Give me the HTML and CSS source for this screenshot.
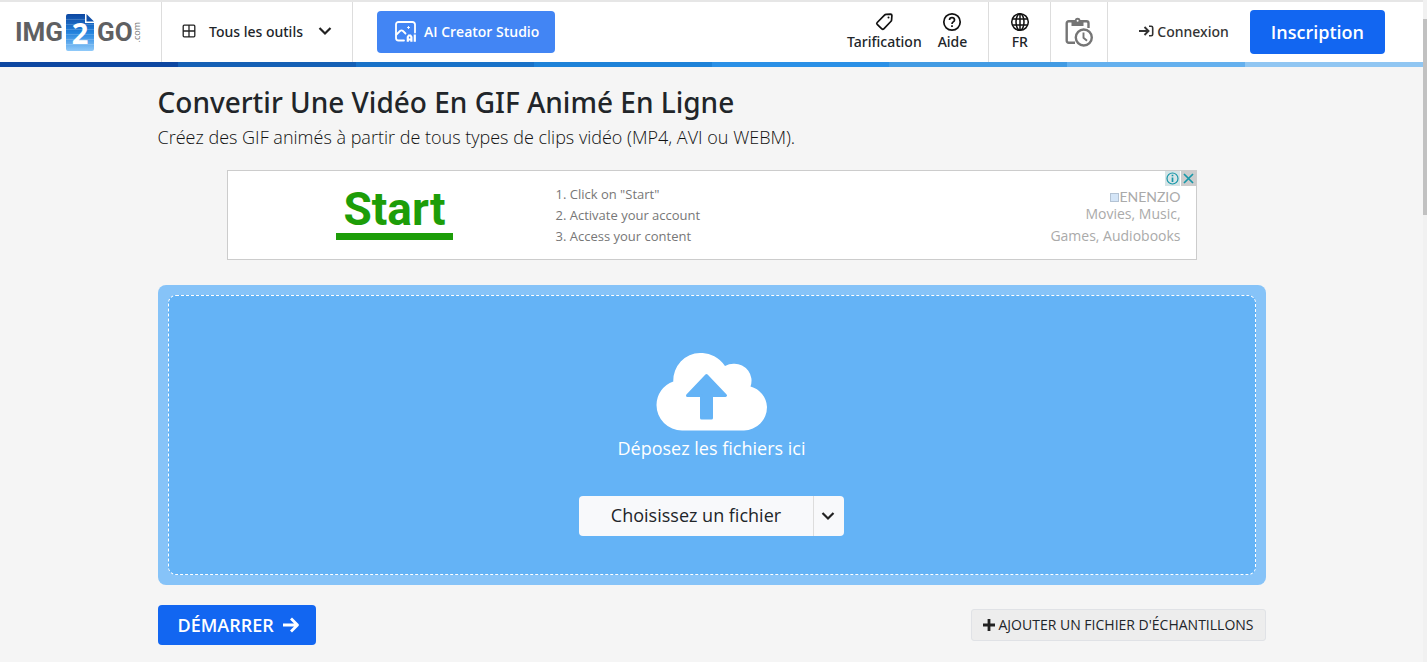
FILE: index.html
```html
<!DOCTYPE html>
<html lang="fr">
<head>
<meta charset="utf-8">
<meta name="viewport" content="width=device-width, initial-scale=1">
<title>Convertir une vidéo en GIF animé en ligne</title>
<link rel="stylesheet" href="styles.css">
</head>
<body>
<div class="page">
  <header class="header">
    <a class="logo" href="#" aria-label="IMG2GO.com">
      <span class="logo-word">IMG</span>
      <span class="logo-page">
        <svg class="logo-sheet" viewBox="0 0 28 37" aria-hidden="true">
          <defs><linearGradient id="sheet" x1="0" y1="0" x2="0" y2="1"><stop offset="0" stop-color="#0d47a1"/><stop offset=".5" stop-color="#2383dd"/><stop offset="1" stop-color="#90caf9"/></linearGradient></defs>
          <path fill="url(#sheet)" d="M2 0h17v9h9v26a2 2 0 0 1-2 2H2a2 2 0 0 1-2-2V2a2 2 0 0 1 2-2z"/>
          <path fill="#1250a8" d="M20.500 0L28 7.500h-7.500z"/>
          <path stroke="#fff" stroke-opacity=".18" d="M0 5.500h19M0 10.500h28M0 15.500h28M0 20.500h28M0 25.500h28M0 30.500h28"/>
        </svg>
        <span class="logo-two">2</span>
      </span>
      <span class="logo-word">GO</span>
      <span class="logo-com">.com</span>
    </a>
    <button class="tools" type="button">
      <svg width="14" height="14" viewBox="0 0 14 14" fill="none" stroke="#222" stroke-width="1.300" aria-hidden="true"><rect x="1.200" y="1.200" width="11.600" height="11.600" rx="1"/><path d="M7 1v12M1 7h12"/></svg>
      <span>Tous les outils</span>
      <svg width="14" height="10" viewBox="0 0 14 10" fill="none" stroke="#222" stroke-width="2.200" aria-hidden="true"><path d="M1.500 2L7 7.500 12.500 2"/></svg>
    </button>
    <a class="creator" href="#">
      <svg width="21" height="21" viewBox="0 0 21 21" fill="none" stroke="#fff" stroke-width="1.800" stroke-linecap="round" stroke-linejoin="round" aria-hidden="true"><path d="M9 19.500H3.500a2.500 2.500 0 0 1-2.500-2.500V3.500A2.500 2.500 0 0 1 3.500 1h14A2.500 2.500 0 0 1 20 3.500v8"/><path d="M1.500 13.500L5 10q1.500-1.300 3 0l2.500 2.500"/><path stroke-width="1" d="M13.500 5.500v2M12.500 6.500h2"/><path stroke-linecap="butt" stroke-linejoin="miter" stroke-width="2.200" d="M12.800 20.800V16l1-1.500h1.600l1 1.500v4.800M12.500 18.500h4M19.800 13.500v7.300"/></svg>
      <span>AI Creator Studio</span>
    </a>
    <nav class="nav">
      <div class="nav-group">
        <a class="nav-link" href="#">
          <svg width="20" height="20" viewBox="0 0 20 20" fill="none" stroke="#111" stroke-width="1.700" stroke-linejoin="round" aria-hidden="true"><path d="M3.200 10.500L10.500 3.200Q11.200 2.500 12.200 2.400L16.500 2.100Q17.900 2.100 17.900 3.500L17.600 7.800Q17.500 8.800 16.800 9.500L9.800 16.800Q8.800 17.700 7.800 16.800L3.200 12.400Q2.300 11.500 3.200 10.500z"/><circle cx="14.500" cy="5.500" r="1" fill="#111" stroke="none"/></svg>
          <span>Tarification</span>
        </a>
        <a class="nav-link" href="#">
          <svg width="20" height="20" viewBox="0 0 20 20" fill="none" stroke="#111" stroke-width="1.700" aria-hidden="true"><circle cx="10" cy="10" r="8.200"/><path d="M7.500 8Q7.600 5.700 10 5.700T12.500 7.900Q12.500 9 11.200 9.900Q10 10.700 10 12"/><path d="M10 13.300v1.800"/></svg>
          <span>Aide</span>
        </a>
      </div>
      <button class="nav-link lang" type="button">
        <svg width="20" height="20" viewBox="0 0 20 20" fill="none" stroke="#111" stroke-width="1.500" aria-hidden="true"><circle cx="10" cy="10" r="8.300"/><ellipse cx="10" cy="10" rx="4" ry="8.300"/><path d="M10 1.700v16.600M2.500 7h15M2.500 13h15"/></svg>
        <span>FR</span>
      </button>
      <button class="history" type="button" aria-label="Historique">
        <svg width="30" height="32" viewBox="0 0 30 32" fill="none" stroke="#757575" stroke-width="2.400" aria-hidden="true"><path d="M11 26.700H4.700a2 2 0 0 1-2-2V7.200a2 2 0 0 1 2-2H8M19 5.200h3.500a2 2 0 0 1 2 2V12"/><path fill="#757575" stroke="none" d="M7.500 4H10.800a2.900 2.900 0 0 1 5.700 0H19.500V10H7.500z"/><circle cx="13.600" cy="4.800" r="1" fill="#fff" stroke="none"/><circle cx="19.800" cy="21.500" r="8"/><path stroke-width="1.900" d="M19.500 16.500v5.300l3.500 3"/></svg>
      </button>
      <a class="login" href="#">
        <svg width="15" height="12" viewBox="0 0 15 12" fill="none" stroke="#333" stroke-width="1.900" aria-hidden="true"><path d="M0 6h9M5.500 2L9.500 6l-4 4"/><path d="M10 1.200h2.200a1.500 1.500 0 0 1 1.500 1.500v6.600a1.500 1.500 0 0 1-1.500 1.500H10" stroke-width="1.600"/></svg>
        <span>Connexion</span>
      </a>
      <a class="signup" href="#">Inscription</a>
    </nav>
  </header>
  <div class="stripe"><i class="s1"></i><i class="s2"></i><i class="s3"></i><i class="s4"></i><i class="s5"></i><i class="s6"></i><i class="s7"></i><i class="s8"></i></div>

  <main class="main">
    <h1 class="title">Convertir Une Vidéo En GIF Animé En Ligne</h1>
    <p class="subtitle">Créez des GIF animés à partir de tous types de clips vidéo (MP4, AVI ou WEBM).</p>

    <aside class="ad">
      <a class="ad-start" href="#">Start</a>
      <ol class="ad-steps"><li>Click on "Start"</li><li>Activate your account</li><li>Access your content</li></ol>
      <div class="ad-brand">
        <div class="ad-name"><span class="ad-mark"></span>ENENZIO</div>
        <div>Movies, Music,</div>
        <div>Games, Audiobooks</div>
      </div>
      <div class="ad-controls">
        <button class="ad-info" type="button" aria-label="Info"><svg width="13" height="13" viewBox="0 0 13 13" fill="none" stroke="#1797a8" aria-hidden="true"><circle cx="6.500" cy="6.500" r="5.500" stroke-width="1.200"/><path stroke-width="1.700" d="M6.500 5.500v4.500M6.500 2.800v1.500"/></svg></button>
        <button class="ad-close" type="button" aria-label="Close"><svg width="11" height="11" viewBox="0 0 11 11" stroke="#1797a8" stroke-width="1.700" aria-hidden="true"><path d="M1 1l9 9M10 1l-9 9"/></svg></button>
      </div>
    </aside>

    <section class="drop">
      <div class="drop-zone">
        <svg width="112" height="78" viewBox="0 0 112 78" aria-hidden="true"><path fill="#fff" d="M26 77.500A25.500 25.500 0 0 1 .500 52A25 25 0 0 1 17.300 28.500A27 27.500 0 0 1 44 0A28 28 0 0 1 69 13A17 17 0 0 1 78 10.700A17 17 0 0 1 94.500 33.500A22.500 22.500 0 0 1 111 54A23.500 23.500 0 0 1 88 77.500z"/><path fill="#64b3f6" stroke="#64b3f6" stroke-width="3" stroke-linejoin="round" d="M50.500 22.500L69.500 42.500H55.500V65H45.500V42.500H31.500z"/></svg>
        <p class="drop-text">Déposez les fichiers ici</p>
        <div class="choose">
          <button class="choose-main" type="button">Choisissez un fichier</button>
          <button class="choose-more" type="button" aria-label="Plus de sources"><svg width="14" height="10" viewBox="0 0 14 10" fill="none" stroke="#222" stroke-width="2.200" aria-hidden="true"><path d="M1.500 2L7 7.500 12.500 2"/></svg></button>
        </div>
      </div>
    </section>

    <div class="actions">
      <button class="start" type="button"><span>DÉMARRER</span><svg width="18" height="16" viewBox="0 0 18 16" fill="none" stroke="#fff" stroke-width="2.800" stroke-linejoin="round" aria-hidden="true"><path d="M1 8h14M9 1.500L15.500 8 9 14.500"/></svg></button>
      <button class="sample" type="button"><svg width="12" height="12" viewBox="0 0 12 12" stroke="#222" stroke-width="2.800" aria-hidden="true"><path d="M6 0v12M0 6h12"/></svg><span>AJOUTER UN FICHIER D'ÉCHANTILLONS</span></button>
    </div>
  </main>
</div>
<div class="scroll" aria-hidden="true"><div class="scroll-thumb"></div></div>
</body>
</html>
```

FILE: styles.css
```css
* { box-sizing: border-box; }

body {
  margin: 0;
  display: flex;
  min-height: 100vh;
  background: #f5f5f5;
  color: #212529;
  font-family: "Open Sans", "Noto Sans", sans-serif;
  font-size: 14px;
}

a { color: inherit; text-decoration: none; }
button { font: inherit; color: inherit; border: 0; background: none; padding: 0; cursor: pointer; }
h1, p, ol { margin: 0; padding: 0; }
svg { display: block; flex: none; }

.page { flex: 1; min-width: 0; }

.scroll { width: 4px; padding-top: 19px; background: #f1f1f1; }
.scroll-thumb { height: 196px; background: #c1c1c1; }

/* Header */
.header {
  display: flex;
  align-items: stretch;
  height: 62px;
  background: #fff;
  border-top: 2px solid #e6e6e6;
  font-family: "Noto Sans", "Open Sans", sans-serif;
}

.logo {
  display: flex;
  align-items: center;
  gap: 3px;
  width: 162px;
  padding-left: 15px;
  border-right: 1px solid #ddd;
  color: #5f6062;
}
.logo-word { font: 700 26px/28px Roboto, sans-serif; }
.logo-page { display: grid; place-items: center; }
.logo-page > * { grid-area: 1 / 1; }
.logo-sheet { width: 28px; height: 37px; }
.logo-two { font: 700 29px/37px "Open Sans", sans-serif; color: #fff; }
.logo-com { margin-left: -3px; font: 9px/8px "Open Sans", sans-serif; writing-mode: vertical-rl; transform: rotate(180deg); color: #777; }

.tools {
  display: flex;
  align-items: center;
  gap: 13px;
  width: 191px;
  padding: 0 0 2px 20px;
  border-right: 1px solid #ddd;
  font-weight: 500;
}
.tools span { margin-right: 2px; }

.creator {
  display: flex;
  align-items: center;
  height: 42px;
  margin: 9px 0 0 24px;
  gap: 8px;
  padding: 0 16px 2px 18px;
  border-radius: 4px;
  background: #4285f4;
  color: #fff;
  font-family: "Open Sans", sans-serif;
  font-weight: 600;
}

.nav { display: flex; margin-left: auto; }
.nav-group { display: flex; gap: 16px; padding-right: 21px; border-right: 1px solid #ddd; }
.nav-link {
  display: flex;
  flex-direction: column;
  align-items: center;
  justify-content: flex-start;
  padding-top: 10px;
  font-weight: 500;
  line-height: 20px;
}
.lang { width: 62px; border-right: 1px solid #ddd; }
.history { display: grid; place-items: center; width: 57px; border-right: 1px solid #ddd; }
.login { display: flex; align-items: center; gap: 3px; padding: 0 21px 2px 31px; color: #333; font-weight: 500; }
.signup {
  align-self: center;
  margin-right: 38px;
  padding: 0 21px;
  border-radius: 4px;
  background: #1266f1;
  color: #fff;
  font-family: "Open Sans", sans-serif;
  font-size: 18px;
  font-weight: 600;
  line-height: 44px;
}

.stripe { display: flex; height: 5px; }
.stripe i { flex: 1; }
.s1 { background: #0d47a1; }
.s2 { background: #1560b5; }
.s3 { background: #1972c8; }
.s4 { background: #1e82d8; }
.s5 { background: #2a90e6; }
.s6 { background: #429be3; }
.s7 { background: #64b0ee; }
.s8 { background: #90c6f2; }

/* Content */
.main { max-width: 1108px; margin: 0 auto; padding-top: 16px; }
.title { font: 500 28px/38px "Noto Sans", sans-serif; }
.subtitle { padding-top: 2px; font-size: 18px; font-weight: 300; line-height: 28px; color: #111; }

.ad {
  position: relative;
  display: grid;
  grid-template-columns: 328px 1fr auto;
  max-width: 970px;
  height: 90px;
  margin: 19px auto 25px;
  padding-right: 15px;
  border: 1px solid #ccc;
  background: #fff;
}
.ad-start {
  justify-self: center;
  align-self: start;
  margin: 15px 0 0 6px;
  padding: 0 7px;
  border-bottom: 7px solid #1d9d08;
  color: #1d9d08;
  font: 700 46px/47px Roboto, sans-serif;
}
.ad-steps { padding-top: 13px; list-style: none; counter-reset: step; color: #777; font-size: 13px; line-height: 21px; }
.ad-steps li { counter-increment: step; }
.ad-steps li::before { content: counter(step) ". "; }
.ad-brand { padding-top: 20px; color: #aaa; line-height: 22px; text-align: right; }
.ad-name { display: flex; align-items: center; justify-content: flex-end; height: 12px; font: 14px/12px Lato, sans-serif; }
.ad-mark { width: 9px; height: 9px; border: 1px solid #b4c3d4; background: #d4e5f7; }
.ad-controls { position: absolute; top: 0; right: 0; display: flex; gap: 1px; }
.ad-controls button { display: grid; place-items: center; width: 15px; height: 15px; background: #ccc; }
.ad-controls .ad-info { background: #d6e4e6; }

.drop { padding: 10px; border-radius: 8px; background: #86c3f8; }
.drop-zone {
  display: flex;
  flex-direction: column;
  align-items: center;
  height: 280px;
  padding-top: 57px;
  border: 1px dashed #fff;
  border-radius: 8px;
  background: #64b3f6;
}
.drop-text { padding-top: 3px; color: #fff; font-size: 18px; line-height: 28px; }
.choose { display: flex; height: 40px; margin-top: 34px; border-radius: 4px; overflow: hidden; background: #f8f9fb; color: #212529; }
.choose-main { width: 235px; padding-bottom: 2px; border-right: 1px solid #ddd; font-size: 18px; font-weight: 500; }
.choose-more { display: grid; place-items: center; width: 30px; padding-right: 2px; }

.actions { display: flex; justify-content: space-between; align-items: center; padding-top: 20px; }
.start {
  display: flex;
  align-items: center;
  gap: 8px;
  height: 40px;
  padding: 0 16px 0 20px;
  border-radius: 4px;
  background: #1266f1;
  color: #fff;
  font-size: 18px;
  font-weight: 600;
}
.sample {
  display: flex;
  align-items: center;
  gap: 4px;
  height: 32px;
  padding: 0 11px 1px;
  border: 1px solid #e0e2e6;
  border-radius: 3px;
  background: #ededed;
}
```
